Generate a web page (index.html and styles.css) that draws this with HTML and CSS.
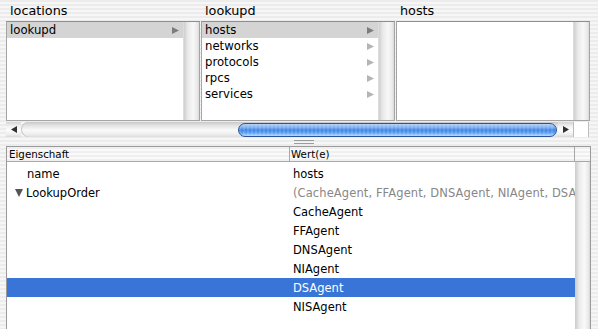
FILE: index.html
```html
<!DOCTYPE html>
<html lang="de">
<head>
    <meta charset="UTF-8">
    <title>lookupd</title>
    <link rel="stylesheet" href="styles.css">
</head>
<body>
    <div class="window">
        <div class="browser">
            <div class="titles">
                <div class="title">locations</div>
                <div class="title">lookupd</div>
                <div class="title">hosts</div>
            </div>

            <div class="columns">
                <div class="column">
                    <div class="list">
                        <div class="cell selected"><span>lookupd</span><svg class="arrow" width="7" height="7"><polygon points="0,0 7,3.5 0,7"/></svg></div>
                    </div>
                    <div class="vtrack"></div>
                </div>
                <div class="column">
                    <div class="list">
                        <div class="cell selected"><span>hosts</span><svg class="arrow" width="7" height="7"><polygon points="0,0 7,3.5 0,7"/></svg></div>
                        <div class="cell"><span>networks</span><svg class="arrow" width="7" height="7"><polygon points="0,0 7,3.5 0,7"/></svg></div>
                        <div class="cell"><span>protocols</span><svg class="arrow" width="7" height="7"><polygon points="0,0 7,3.5 0,7"/></svg></div>
                        <div class="cell"><span>rpcs</span><svg class="arrow" width="7" height="7"><polygon points="0,0 7,3.5 0,7"/></svg></div>
                        <div class="cell"><span>services</span><svg class="arrow" width="7" height="7"><polygon points="0,0 7,3.5 0,7"/></svg></div>
                    </div>
                    <div class="vtrack"></div>
                </div>
                <div class="column">
                    <div class="list"></div>
                    <div class="vtrack"></div>
                </div>
            </div>

            <div class="hscroll">
                <div class="hbtn"><svg width="6" height="7"><polygon points="6,0 0,3.5 6,7"/></svg></div>
                <div class="htrack"><div class="thumb"></div></div>
                <div class="hbtn"><svg width="6" height="7"><polygon points="0,0 6,3.5 0,7"/></svg></div>
                <div class="hcorner"></div>
            </div>
        </div>

        <div class="splitter"><div class="grip"></div></div>

        <div class="table">
            <div class="thead">
                <div class="th th-key">Eigenschaft</div>
                <div class="th th-val">Wert(e)</div>
                <div class="th th-corner"></div>
            </div>
            <div class="tbody">
                <div class="rows">
                    <div class="row"><div class="key indent">name</div><div class="val">hosts</div></div>
                    <div class="row"><div class="key"><svg class="disclosure" width="8" height="8"><polygon points="0,0 8,0 4,8"/></svg>LookupOrder</div><div class="val summary">(CacheAgent, FFAgent, DNSAgent, NIAgent, DSA</div></div>
                    <div class="row"><div class="key"></div><div class="val">CacheAgent</div></div>
                    <div class="row"><div class="key"></div><div class="val">FFAgent</div></div>
                    <div class="row"><div class="key"></div><div class="val">DNSAgent</div></div>
                    <div class="row"><div class="key"></div><div class="val">NIAgent</div></div>
                    <div class="row selected"><div class="key"></div><div class="val">DSAgent</div></div>
                    <div class="row"><div class="key"></div><div class="val">NISAgent</div></div>
                </div>
                <div class="vscroll"></div>
            </div>
        </div>
    </div>
</body>
</html>
```

FILE: styles.css
```css
html, body { margin: 0; height: 100%; overflow: hidden; }
body {
    font-family: "DejaVu Sans", "Liberation Sans", sans-serif;
    color: #000;
    background: repeating-linear-gradient(#ececec 0 2px, #f6f6f6 2px 4px);
}
.window { padding-left: 6px; width: 584px; }

/* column browser */
.titles { display: flex; gap: 1px; height: 21px; }
.title { width: 194px; padding-left: 4px; box-sizing: border-box; font-size: 12.8px; line-height: 21px; }

.columns { display: flex; gap: 1px; }
.column { width: 194px; height: 100px; box-sizing: border-box; border: 1px solid #a5a5a5; border-top-color: #8e8e8e; display: flex; background: #fff; }
.list { flex: 1; }
.vtrack { width: 15px; background: linear-gradient(to right, #cfcfcf, #e9e9e9 25%, #f8f8f8 60%, #ececec 85%, #dadada); border-left: 1px solid #dcdcdc; }

.cell { height: 16px; display: flex; align-items: center; justify-content: space-between; padding: 0 4px 0 3px; font-size: 11.7px; }
.cell.selected { background: #d4d4d4; }
.arrow { fill: #b4b4b4; }
.cell.selected .arrow { fill: #7c7c7c; }

.hscroll { display: flex; height: 15px; margin-top: 1px; width: 583px; }
.hbtn { width: 15px; display: flex; align-items: center; justify-content: center; background: linear-gradient(#d6d6d6, #f2f2f2 30%, #fdfdfd 55%, #ececec 85%, #d8d8d8); }
.hbtn svg { fill: #303030; }
.htrack { flex: 1; display: flex; align-items: center; background: linear-gradient(#c9c9c9, #e4e4e4 25%, #f9f9f9 55%, #efefef 80%, #dcdcdc); border-radius: 8px 0 0 8px; box-shadow: inset 1px 0 0 #c4c4c4; }
.thumb {
    margin-left: 217px; width: 319px; height: 14px; box-sizing: border-box;
    border: 1px solid #27559d; border-radius: 8px;
    background:
        repeating-linear-gradient(90deg, rgba(255,255,255,0.12) 0 2px, rgba(0,0,0,0) 2px 4px),
        linear-gradient(#b3d2f8, #78adf0 30%, #3f84e4 50%, #5b9cef 72%, #b4dbff);
}
.hcorner { background: #fff; border-left: 1px solid #bdbdbd; border-right: 1px solid #bdbdbd; box-sizing: border-box; width: 16px; }

.splitter { height: 9px; display: flex; justify-content: center; align-items: center; padding-left: 12px; }
.grip { width: 20px; height: 2px; border-top: 1px solid #9c9c9c; border-bottom: 1px solid #9c9c9c; }

/* outline table */
.table { width: 585px; height: 183px; border: 1px solid #9a9a9a; border-bottom: none; box-sizing: border-box; display: flex; flex-direction: column; }
.thead { display: flex; height: 14px; flex: none; border-bottom: 1px solid #a8a8a8; background: repeating-linear-gradient(#efefef 0 2px, #fafafa 2px 4px); font-size: 10.3px; line-height: 14px; }
.th { box-sizing: border-box; }
.th-key { width: 283px; padding-left: 2px; border-right: 1px solid #a8a8a8; }
.th-val { width: 285px; padding-left: 1px; border-right: 1px solid #a8a8a8; }
.th-corner { flex: 1; }

.tbody { display: flex; flex: 1; min-height: 0; background: #fff; }
.rows { width: 568px; padding-top: 2px; font-size: 11.5px; }
.row { display: flex; height: 19px; align-items: center; white-space: nowrap; }
.row.selected { background: #3875d7; color: #fff; }
.key { width: 283px; display: flex; align-items: center; padding-left: 8px; box-sizing: border-box; }
.key.indent { padding-left: 20px; }
.disclosure { fill: #555; margin-right: 3px; }
.val { width: 285px; padding-left: 3px; box-sizing: border-box; overflow: hidden; }
.val.summary { color: #878787; letter-spacing: 0.1px; }
.vscroll { flex: 1; background: linear-gradient(to right, #d2d2d2, #ececec 25%, #f9f9f9 60%, #ececec 85%, #d9d9d9); border-left: 1px solid #cfcfcf; }
```
